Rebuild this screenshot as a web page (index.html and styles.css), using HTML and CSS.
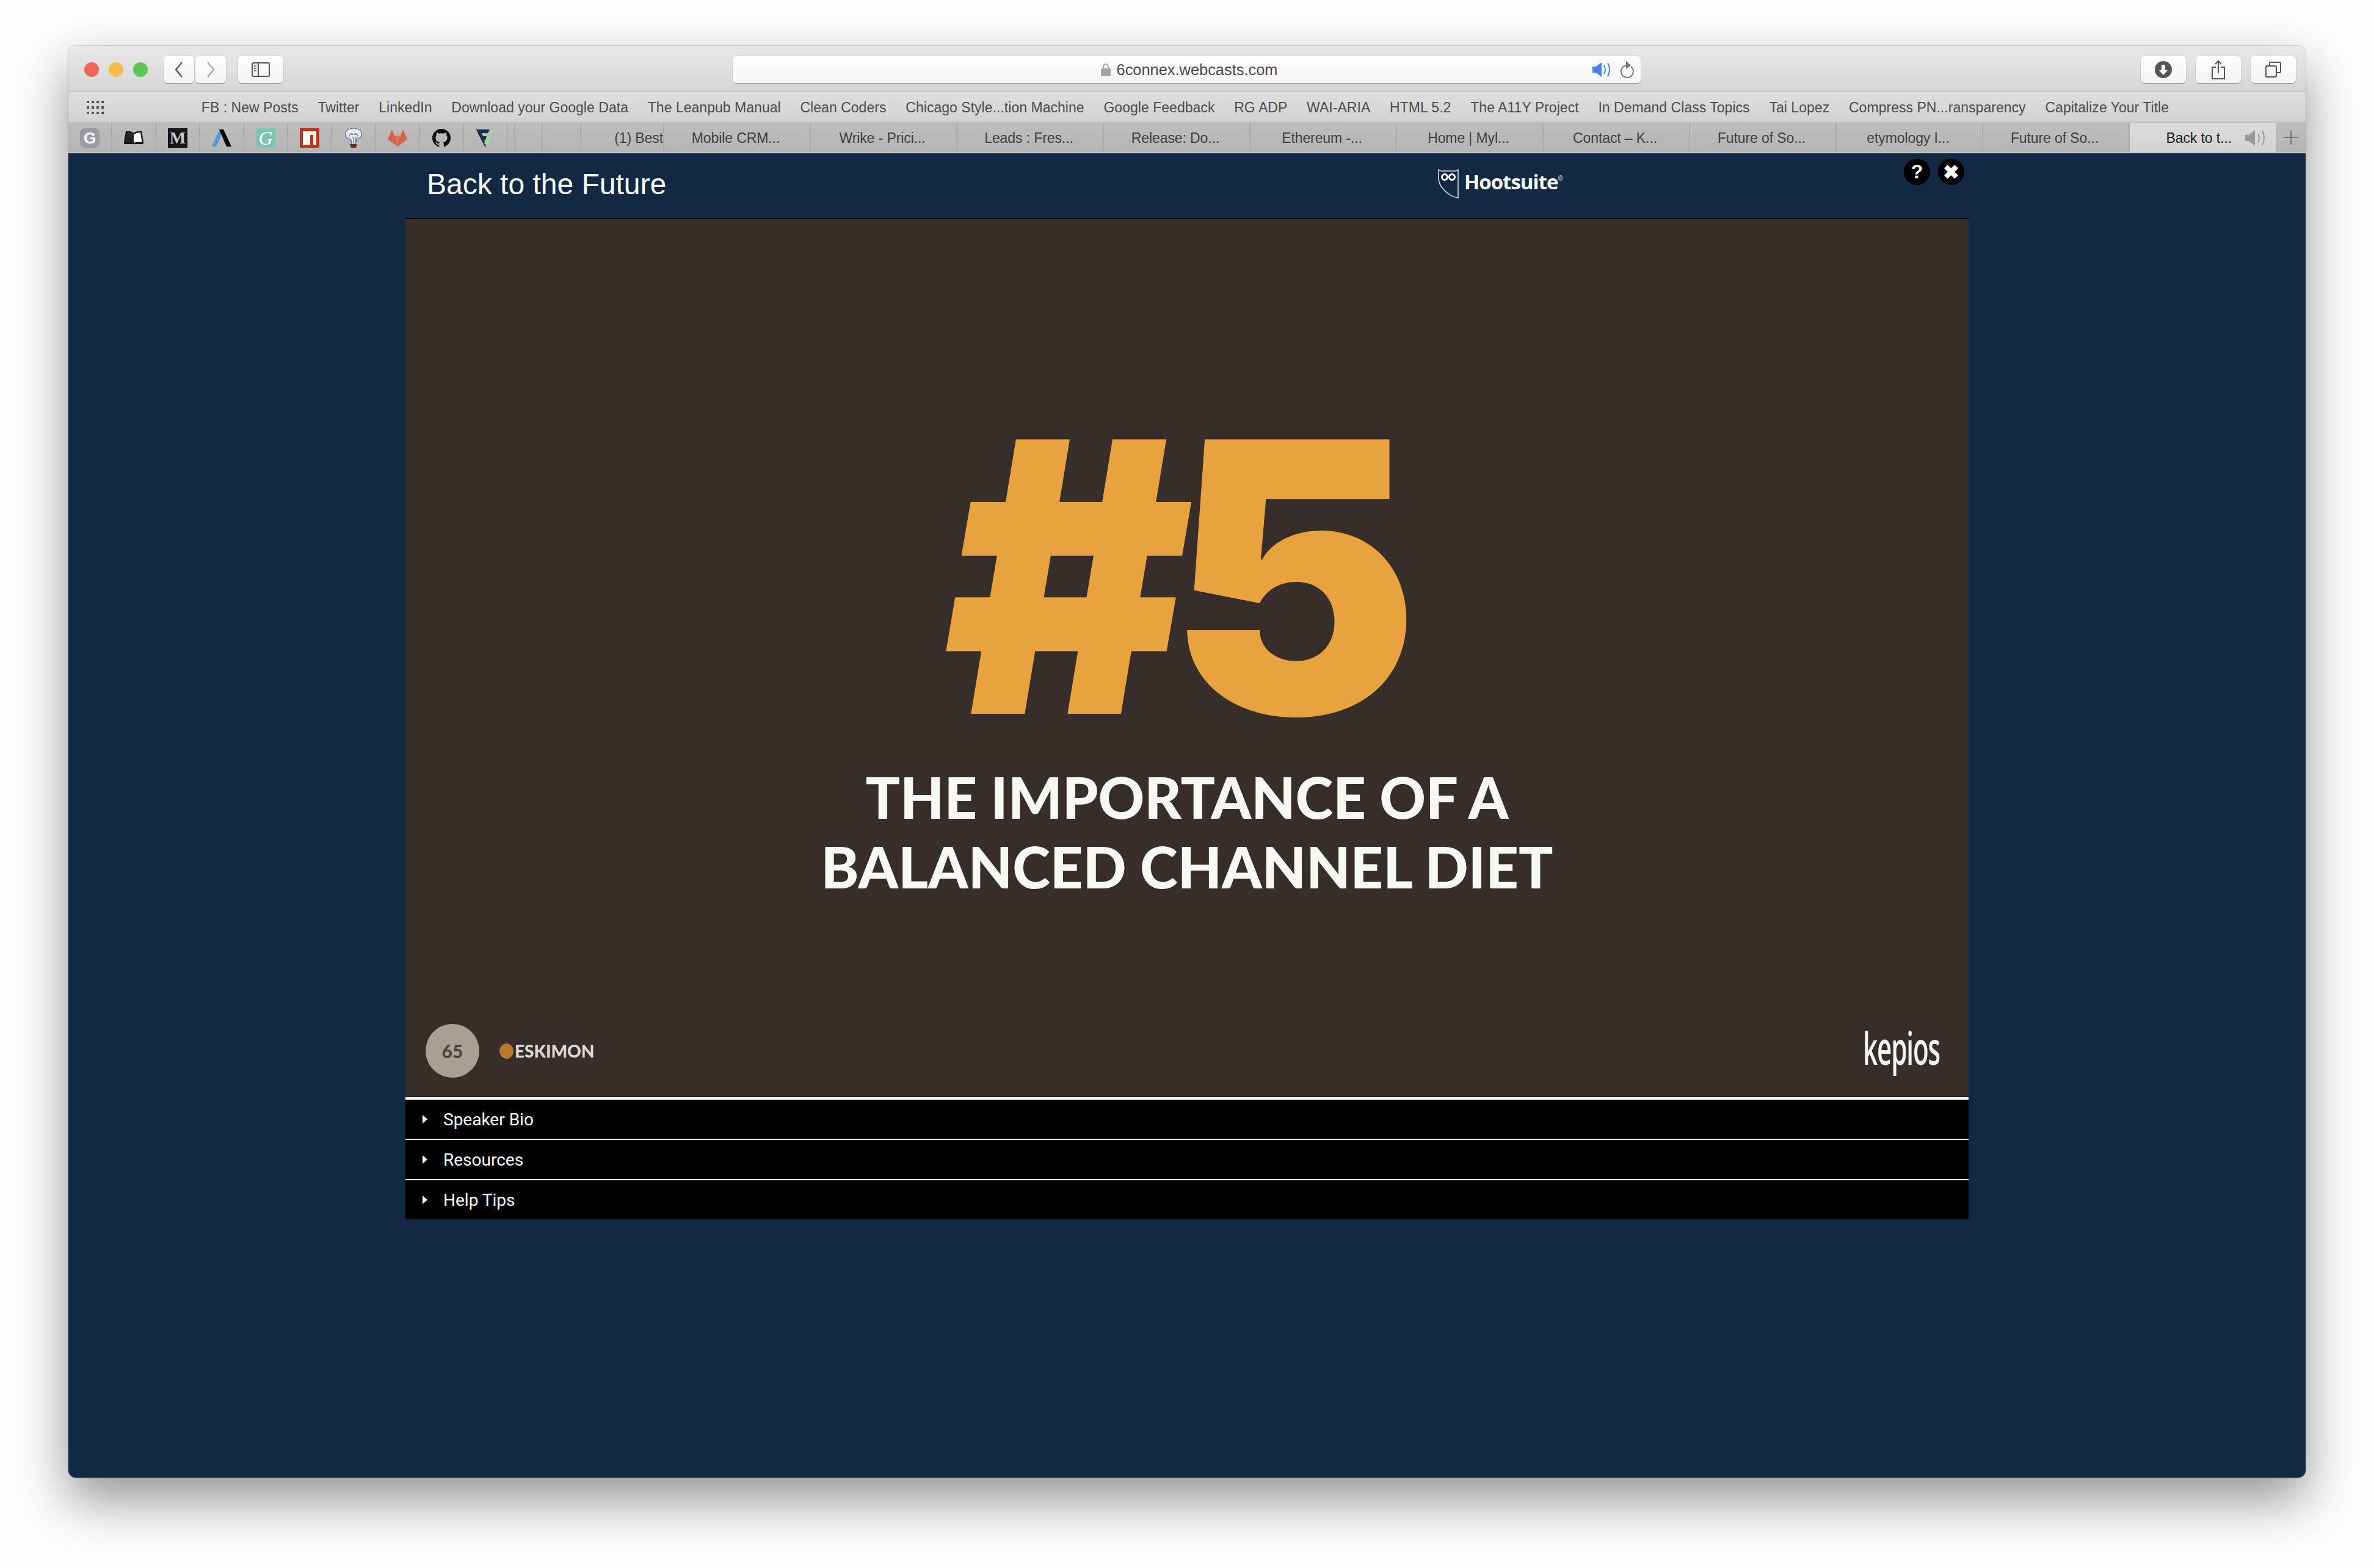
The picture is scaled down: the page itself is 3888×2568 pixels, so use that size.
FILE: index.html
```html
<!DOCTYPE html>
<html lang="en">
<head>
    <meta charset="UTF-8">
    <title>Back to the Future</title>
    <link rel="stylesheet" href="styles.css">
</head>
<body>

<div class="window">

    <!-- Title bar -->
    <div class="toolbar">
        <div class="lights">
            <span class="light red"></span>
            <span class="light yellow"></span>
            <span class="light green"></span>
        </div>
        <div class="nav-group">
            <div class="tool-btn nav-btn">
                <svg width="16" height="28" viewBox="0 0 16 28"><path d="M13 2 3 14l10 12" fill="none" stroke="#555" stroke-width="2.4"/></svg>
            </div>
            <div class="tool-btn nav-btn">
                <svg width="16" height="28" viewBox="0 0 16 28"><path d="m3 2 10 12L3 26" fill="none" stroke="#aaa" stroke-width="2.4"/></svg>
            </div>
        </div>
        <div class="tool-btn sidebar-btn">
            <svg width="30" height="24" viewBox="0 0 30 24"><rect x="1" y="1" width="28" height="22" rx="2" fill="none" stroke="#555" stroke-width="2"/><path d="M11 1v22" stroke="#555" stroke-width="2"/><path d="M4 6h4M4 10h4M4 14h4" stroke="#777" stroke-width="2"/></svg>
        </div>
        <div class="address">
            <svg class="lock" width="16" height="22" viewBox="0 0 16 22"><path d="M4 10V6a4 4 0 0 1 8 0v4" fill="none" stroke="#a5a5a5" stroke-width="2"/><rect y="9" width="16" height="13" rx="1" fill="#a5a5a5"/></svg>
            <span class="address-text">6connex.webcasts.com</span>
            <div class="address-icons">
                <svg width="32" height="26" viewBox="0 0 32 26"><path d="M0 8h6l9-7v24l-9-7H0z" fill="#4a7ef0"/><path d="M19 6q4 7 0 14M25 2q6 11 0 22" fill="none" stroke="#4a7ef0" stroke-width="2"/></svg>
                <svg width="24" height="28" viewBox="0 0 24 28"><path d="M19 9a10 10 0 1 1-7-2" fill="none" stroke="#777" stroke-width="2"/><path d="M11 0l8 7-8 6z" fill="#777"/></svg>
            </div>
        </div>
        <div class="tool-right">
            <div class="tool-btn right-btn">
                <svg width="28" height="28" viewBox="0 0 28 28"><circle cx="14" cy="14" r="14" fill="#555"/><path d="M11 6h6v9h4l-7 8-7-8h4z" fill="#fff"/></svg>
            </div>
            <div class="tool-btn right-btn">
                <svg width="24" height="32" viewBox="0 0 24 32"><path d="M8 12H2v19h20V12h-6" fill="none" stroke="#555" stroke-width="2"/><path d="M12 22V2M7 7l5-5 5 5" fill="none" stroke="#555" stroke-width="2"/></svg>
            </div>
            <div class="tool-btn right-btn">
                <svg width="26" height="26" viewBox="0 0 26 26"><rect x="1" y="7" width="17" height="18" rx="2" fill="none" stroke="#555" stroke-width="2"/><path d="M7 6V3a2 2 0 0 1 2-2h14a2 2 0 0 1 2 2v13a2 2 0 0 1-2 2h-4" fill="none" stroke="#555" stroke-width="2"/></svg>
            </div>
        </div>
    </div>

    <!-- Favourites bar -->
    <div class="bookmarks">
        <svg class="grid-icon" width="28" height="22" viewBox="0 0 28 22" fill="#555">
            <path d="M0 0h4v4H0zM8 0h4v4H8zM16 0h4v4h-4zM24 0h4v4h-4zM0 9h4v4H0zM8 9h4v4H8zM16 9h4v4h-4zM24 9h4v4h-4zM0 18h4v4H0zM8 18h4v4H8zM16 18h4v4h-4zM24 18h4v4h-4z"/>
        </svg>
        <span>FB : New Posts</span>
        <span>Twitter</span>
        <span>LinkedIn</span>
        <span>Download your Google Data</span>
        <span>The Leanpub Manual</span>
        <span>Clean Coders</span>
        <span>Chicago Style...tion Machine</span>
        <span>Google Feedback</span>
        <span>RG ADP</span>
        <span>WAI-ARIA</span>
        <span>HTML 5.2</span>
        <span>The A11Y Project</span>
        <span>In Demand Class Topics</span>
        <span>Tai Lopez</span>
        <span>Compress PN...ransparency</span>
        <span>Capitalize Your Title</span>
    </div>

    <!-- Tabs -->
    <div class="tabs">
        <div class="pin"><span class="fav-g">G</span></div>
        <div class="pin">
            <svg width="32" height="22" viewBox="0 0 32 22"><path d="M16 4Q10 0 4 1L1 19q8-1 15 1 7-2 15-1L28 1q-6-1-12 3z" fill="#fff" stroke="#111" stroke-width="2.4"/><path d="M16 4Q10 0 4 1L2 18q8-1 14 1z" fill="#222"/><path d="M7 4h6M7 8h6" stroke="#444" stroke-width="1"/><path d="M1 19q8-1 15 1 7-2 15-1v2H1z" fill="#111"/></svg>
        </div>
        <div class="pin"><span class="fav-m">M</span></div>
        <div class="pin">
            <svg width="32" height="28" viewBox="0 0 32 28"><path d="M12 1 0 28h7L16 8z" fill="#4a9ae0"/><path d="M12 0h7l13 28h-8z" fill="#000"/></svg>
        </div>
        <div class="pin"><span class="fav-gram">G</span></div>
        <div class="pin">
            <svg width="32" height="32" viewBox="0 0 32 32"><rect width="32" height="32" fill="#bf3119"/><path d="M5 5h22v22h-5V11h-5v16H5z" fill="#fff"/></svg>
        </div>
        <div class="pin">
            <svg width="28" height="32" viewBox="0 0 28 32"><path d="M9 1q5-2 10 0 7 0 8 7 1 7-5 9l-3 1-2 8h-6l-1-7-5-2Q0 15 1 8q1-6 8-7z" fill="#e3e8f5" stroke="#666" stroke-width="1.2"/><path d="M9 9q-3 3-2 7M19 9q3 3 2 7" fill="none" stroke="#8a94ad" stroke-width="1.2"/><path d="M9 9l4 1M19 9l-4 1" stroke="#3d6fa8" stroke-width="2"/><path d="M13 14q1 5 1 10M17 14q2 3 0 8" fill="none" stroke="#666" stroke-width="1.2"/><path d="M8 26h12l-2 6h-8z" fill="#5e3418"/></svg>
        </div>
        <div class="pin">
            <svg width="32" height="28" viewBox="0 0 32 28"><path d="M7 0l4 10h10l4-10 7 16-16 12L0 16z" fill="#d5624a"/><path d="M11 10h10l-5 18z" fill="#dd7459"/></svg>
        </div>
        <div class="pin">
            <svg width="30" height="30" viewBox="0 0 16 16"><path d="M8 0C3.58 0 0 3.58 0 8c0 3.54 2.29 6.53 5.47 7.59.4.07.55-.17.55-.38 0-.19-.01-.82-.01-1.49-2.01.37-2.53-.49-2.69-.94-.09-.23-.48-.94-.82-1.13-.28-.15-.68-.52-.01-.53.63-.01 1.08.58 1.23.82.72 1.21 1.87.87 2.33.66.07-.52.28-.87.51-1.07-1.78-.2-3.64-.89-3.64-3.95 0-.87.31-1.59.82-2.15-.08-.2-.36-1.02.08-2.12 0 0 .67-.21 2.2.82.64-.18 1.32-.27 2-.27.68 0 1.36.09 2 .27 1.53-1.04 2.2-.82 2.2-.82.44 1.1.16 1.92.08 2.12.51.56.82 1.27.82 2.15 0 3.07-1.87 3.75-3.65 3.95.29.25.54.73.54 1.48 0 1.07-.01 1.93-.01 2.2 0 .21.15.46.55.38A8.013 8.013 0 0 0 16 8c0-4.42-3.58-8-8-8z" fill="#0c0c0c"/></svg>
        </div>
        <div class="pin">
            <svg width="30" height="28" viewBox="0 0 30 28"><path d="M0 0h22l-3 6H9l2 5h6l-2 6h-2l3 11h-2L3 7z" fill="#17314f"/><path d="M22 11 15 24" stroke="#93e08f" stroke-width="4.6" fill="none"/><circle cx="26" cy="4" r="3" fill="#93e08f"/></svg>
        </div>
        <div class="pin-thin"></div>
        <div class="pin-blank pin-blank-a"></div>
        <div class="pin-blank pin-blank-b"></div>
        <div class="tab tab-clip">(1) Best</div>
        <div class="tab">Mobile CRM...</div>
        <div class="tab">Wrike - Prici...</div>
        <div class="tab">Leads : Fres...</div>
        <div class="tab">Release: Do...</div>
        <div class="tab">Ethereum -...</div>
        <div class="tab">Home | Myl...</div>
        <div class="tab">Contact – K...</div>
        <div class="tab">Future of So...</div>
        <div class="tab">etymology I...</div>
        <div class="tab">Future of So...</div>
        <div class="tab tab-active">
            <span>Back to t...</span>
            <svg width="34" height="32" viewBox="0 0 34 32"><path d="M0 11h6l10-8v26L6 21H0z" fill="#999"/><path d="M21 9q4 7 0 14M28 4q6 12 0 24" fill="none" stroke="#999" stroke-width="2"/></svg>
        </div>
        <div class="tab-new">
            <svg width="24" height="24" viewBox="0 0 24 24"><path d="M12 0v24M0 12h24" stroke="#777" stroke-width="2"/></svg>
        </div>
    </div>

    <!-- Page -->
    <div class="page">
        <div class="player">
            <div class="player-head">
                <div class="player-title">Back to the Future</div>
                <div class="hoot">
                    <svg width="34" height="48" viewBox="0 0 34 48">
                        <path d="M1 1q3 3 8 2h16q5 1 8-2v46q-14-2-25-15Q1 24 1 14z" fill="none" stroke="#d5d9de" stroke-width="1.6"/>
                        <circle cx="11" cy="13" r="6" fill="#fff"/><circle cx="23" cy="13" r="6" fill="#fff"/>
                        <circle cx="11" cy="13" r="3" fill="#12283f"/><circle cx="23" cy="13" r="3" fill="#12283f"/>
                    </svg>
                    <span class="hoot-name">Hootsuite<sup>®</sup></span>
                </div>
                <div class="head-btns">
                    <span class="round-btn">?</span>
                    <span class="round-btn">✖</span>
                </div>
            </div>
            <div class="slide">
                <div class="slide-num">#5</div>
                <div class="slide-title">THE IMPORTANCE OF A<br>BALANCED CHANNEL DIET</div>
                <div class="slide-foot">
                    <span class="page-no">65</span>
                    <span class="handle"><i class="handle-dot"></i>ESKIMON</span>
                    <span class="kepios">kepios</span>
                </div>
            </div>
            <div class="acc-row"><i class="arrow"></i>Speaker Bio</div>
            <div class="acc-row"><i class="arrow"></i>Resources</div>
            <div class="acc-row"><i class="arrow"></i>Help Tips</div>
        </div>
    </div>

</div>

</body>
</html>
```

FILE: styles.css
```css
html, body {
    margin: 0;
    padding: 0;
}
body {
    width: 3888px;
    height: 2568px;
    box-sizing: border-box;
    padding: 75px 112px 0;
    background-color: #fdfdfd;
    font-family: "Liberation Sans", Arial, sans-serif;
    overflow: hidden;
}
.window {
    height: 2345px;
    display: flex;
    flex-direction: column;
    border-radius: 12px;
    overflow: hidden;
    box-shadow: 0 0 1px 1px rgba(0, 0, 0, 0.15), 0 36px 84px rgba(0, 0, 0, 0.42);
}

/* Title bar */
.toolbar {
    height: 76px;
    box-sizing: border-box;
    display: flex;
    align-items: center;
    padding: 4px 16px 0 26px;
    background: linear-gradient(#e9e9e9, #d6d6d6);
    border-bottom: 2px solid #c5c5c5;
}
.lights {
    display: flex;
    gap: 16px;
}
.light {
    width: 24px;
    height: 24px;
    border-radius: 50%;
}
.red { background-color: #f2665c; }
.yellow { background-color: #f8be4c; }
.green { background-color: #5ec654; }
.tool-btn {
    height: 44px;
    box-sizing: border-box;
    display: flex;
    align-items: center;
    justify-content: center;
    background: linear-gradient(#fefefe, #f3f3f3);
    border-radius: 6px;
    box-shadow: 0 1px 1px rgba(0, 0, 0, 0.3), 0 0 0 1px rgba(0, 0, 0, 0.05);
}
.nav-group {
    display: flex;
    gap: 2px;
    margin-left: 26px;
}
.nav-btn {
    width: 50px;
}
.sidebar-btn {
    width: 74px;
    margin-left: 20px;
}
.address {
    width: 1487px;
    height: 44px;
    margin-left: 736px;
    box-sizing: border-box;
    position: relative;
    display: flex;
    align-items: center;
    justify-content: center;
    gap: 10px;
    padding-left: 8px;
    background: linear-gradient(#fdfdfd, #f6f6f6);
    border-radius: 6px;
    box-shadow: 0 1px 1px rgba(0, 0, 0, 0.3), 0 0 0 1px rgba(0, 0, 0, 0.05);
}
.address-text {
    font-size: 25.4px;
    color: #4a4a4a;
}
.address-icons {
    position: absolute;
    right: 11px;
    top: 8px;
    display: flex;
    align-items: center;
    gap: 12px;
}
.tool-right {
    margin-left: auto;
    display: flex;
    gap: 16px;
}
.right-btn {
    width: 74px;
}

/* Favourites bar */
.bookmarks {
    height: 50px;
    box-sizing: border-box;
    display: flex;
    align-items: center;
    gap: 31.8px;
    padding: 2px 0 0 30px;
    font-size: 23px;
    letter-spacing: 0.03px;
    color: #4c4c4c;
    white-space: nowrap;
    background: linear-gradient(#dedede, #d3d3d3);
    border-bottom: 2px solid #c0c0c0;
}
.grid-icon {
    margin-right: 128px;
}

/* Tabs */
.tabs {
    height: 50px;
    box-sizing: border-box;
    display: flex;
    background: linear-gradient(#bdbdbd, #b5b5b5);
    border-bottom: 2px solid #c6c6c6;
    font-size: 23px;
    letter-spacing: -0.1px;
    color: #3f3f3f;
}
.pin {
    width: 72px;
    box-sizing: border-box;
    flex: none;
    display: flex;
    align-items: center;
    justify-content: center;
    padding-top: 2px;
    border-right: 2px solid #ababab;
}
.pin-thin {
    width: 12px;
    flex: none;
    box-sizing: border-box;
    border-right: 2px solid #ababab;
}
.pin-blank {
    flex: none;
    box-sizing: border-box;
    border-right: 2px solid #ababab;
}
.pin-blank-a { width: 45px; }
.pin-blank-b { width: 63px; }
.tab {
    width: 240px;
    flex: none;
    box-sizing: border-box;
    display: flex;
    align-items: center;
    justify-content: center;
    padding: 2px 4px 0 0;
    border-right: 2px solid #ababab;
    white-space: nowrap;
}
.tab-clip {
    width: 136px;
    justify-content: flex-end;
    padding-right: 0;
}
.tab-active {
    width: 239px;
    justify-content: flex-end;
    gap: 22px;
    padding-right: 16px;
    border-right: none;
    color: #222;
    background: linear-gradient(#dcdcdc, #d2d2d2);
}
.tab-new {
    flex: 1;
    display: flex;
    align-items: center;
    justify-content: center;
}
.fav-g {
    width: 32px;
    height: 32px;
    display: flex;
    align-items: center;
    justify-content: center;
    background-color: #9a9aa6;
    border-radius: 8px;
    color: #fff;
    font-size: 26px;
    font-weight: bold;
}
.fav-m {
    width: 32px;
    height: 32px;
    display: flex;
    align-items: center;
    justify-content: center;
    background-color: #151515;
    color: #c9c9c9;
    font-family: "Liberation Serif", serif;
    font-size: 28px;
    font-weight: bold;
}
.fav-gram {
    width: 32px;
    height: 32px;
    display: flex;
    align-items: center;
    justify-content: center;
    background-color: #7cc5b2;
    color: #fff;
    font-family: "Liberation Serif", serif;
    font-size: 32px;
    font-style: italic;
}

/* Page */
.page {
    flex: 1;
    background-color: #132842;
    display: flex;
    justify-content: center;
}
.player {
    width: 2560px;
}
.player-head {
    height: 108px;
    box-sizing: border-box;
    display: flex;
    border-bottom: 2px solid #000;
    color: #fff;
}
.player-title {
    width: 1691px;
    box-sizing: border-box;
    padding: 25px 0 0 35px;
    font-size: 48px;
    line-height: 52px;
}
.hoot {
    display: flex;
    gap: 9px;
    padding-top: 26px;
}
.hoot-name {
    margin-top: -1px;
    font-family: "Open Sans", sans-serif;
    font-size: 33px;
    line-height: 44px;
    font-weight: 700;
    letter-spacing: -1px;
}
.hoot-name sup {
    font-size: 10px;
    font-weight: normal;
    vertical-align: 14px;
    line-height: 0;
}
.head-btns {
    margin-left: auto;
    margin-right: 7px;
    padding-top: 9px;
    display: flex;
    gap: 13px;
}
.round-btn {
    width: 43px;
    height: 43px;
    border-radius: 50%;
    background-color: #000;
    display: flex;
    align-items: center;
    justify-content: center;
    color: #fff;
    font-size: 32px;
    font-weight: bold;
}

/* Slide */
.slide {
    height: 1438px;
    box-sizing: border-box;
    display: flex;
    flex-direction: column;
    align-items: center;
    background-color: #372d29;
    border-bottom: 1px solid #000;
}
.slide-num {
    margin-top: 315px;
    margin-right: 60px;
    height: 540px;
    font-family: Inter, sans-serif;
    font-weight: 900;
    font-size: 618px;
    line-height: 540px;
    letter-spacing: -42px;
    color: #e8a33f;
}
.slide-title {
    margin-top: 34px;
    font-family: Lato, sans-serif;
    font-weight: 900;
    font-size: 93.6px;
    line-height: 114px;
    text-align: center;
    color: #f8f8f6;
}
.slide-foot {
    align-self: stretch;
    margin-top: auto;
    padding: 0 47px 31px 33px;
    display: flex;
    align-items: center;
}
.page-no {
    width: 88px;
    height: 88px;
    border-radius: 50%;
    background-color: #a99f94;
    display: flex;
    align-items: center;
    justify-content: center;
    font-family: Lato, sans-serif;
    font-weight: 900;
    font-size: 30px;
    color: #4b4540;
}
.handle {
    margin-left: 33px;
    display: flex;
    align-items: center;
    gap: 2px;
    font-family: Lato, sans-serif;
    font-weight: 900;
    font-size: 28px;
    color: #dedbd6;
}
.handle-dot {
    width: 23px;
    height: 25px;
    border-radius: 50%;
    background-color: #b9772c;
}
.kepios {
    margin: 0 0 10px auto;
    font-family: "Open Sans", sans-serif;
    font-weight: 600;
    font-size: 74px;
    line-height: 68px;
    letter-spacing: -2px;
    color: #f4f4f2;
    transform: scaleX(0.57);
    transform-origin: right center;
}

/* Accordion rows */
.acc-row {
    height: 66px;
    box-sizing: border-box;
    display: flex;
    align-items: center;
    background-color: #000;
    border-top: 2px solid #fff;
    padding-left: 28px;
    font-family: Roboto, sans-serif;
    font-size: 28px;
    color: #fff;
}
.slide + .acc-row {
    height: 68px;
    border-top-width: 4px;
}
.arrow {
    width: 0;
    height: 0;
    margin-right: 26px;
    border-left: 8px solid #fff;
    border-top: 7px solid transparent;
    border-bottom: 7px solid transparent;
}
```
